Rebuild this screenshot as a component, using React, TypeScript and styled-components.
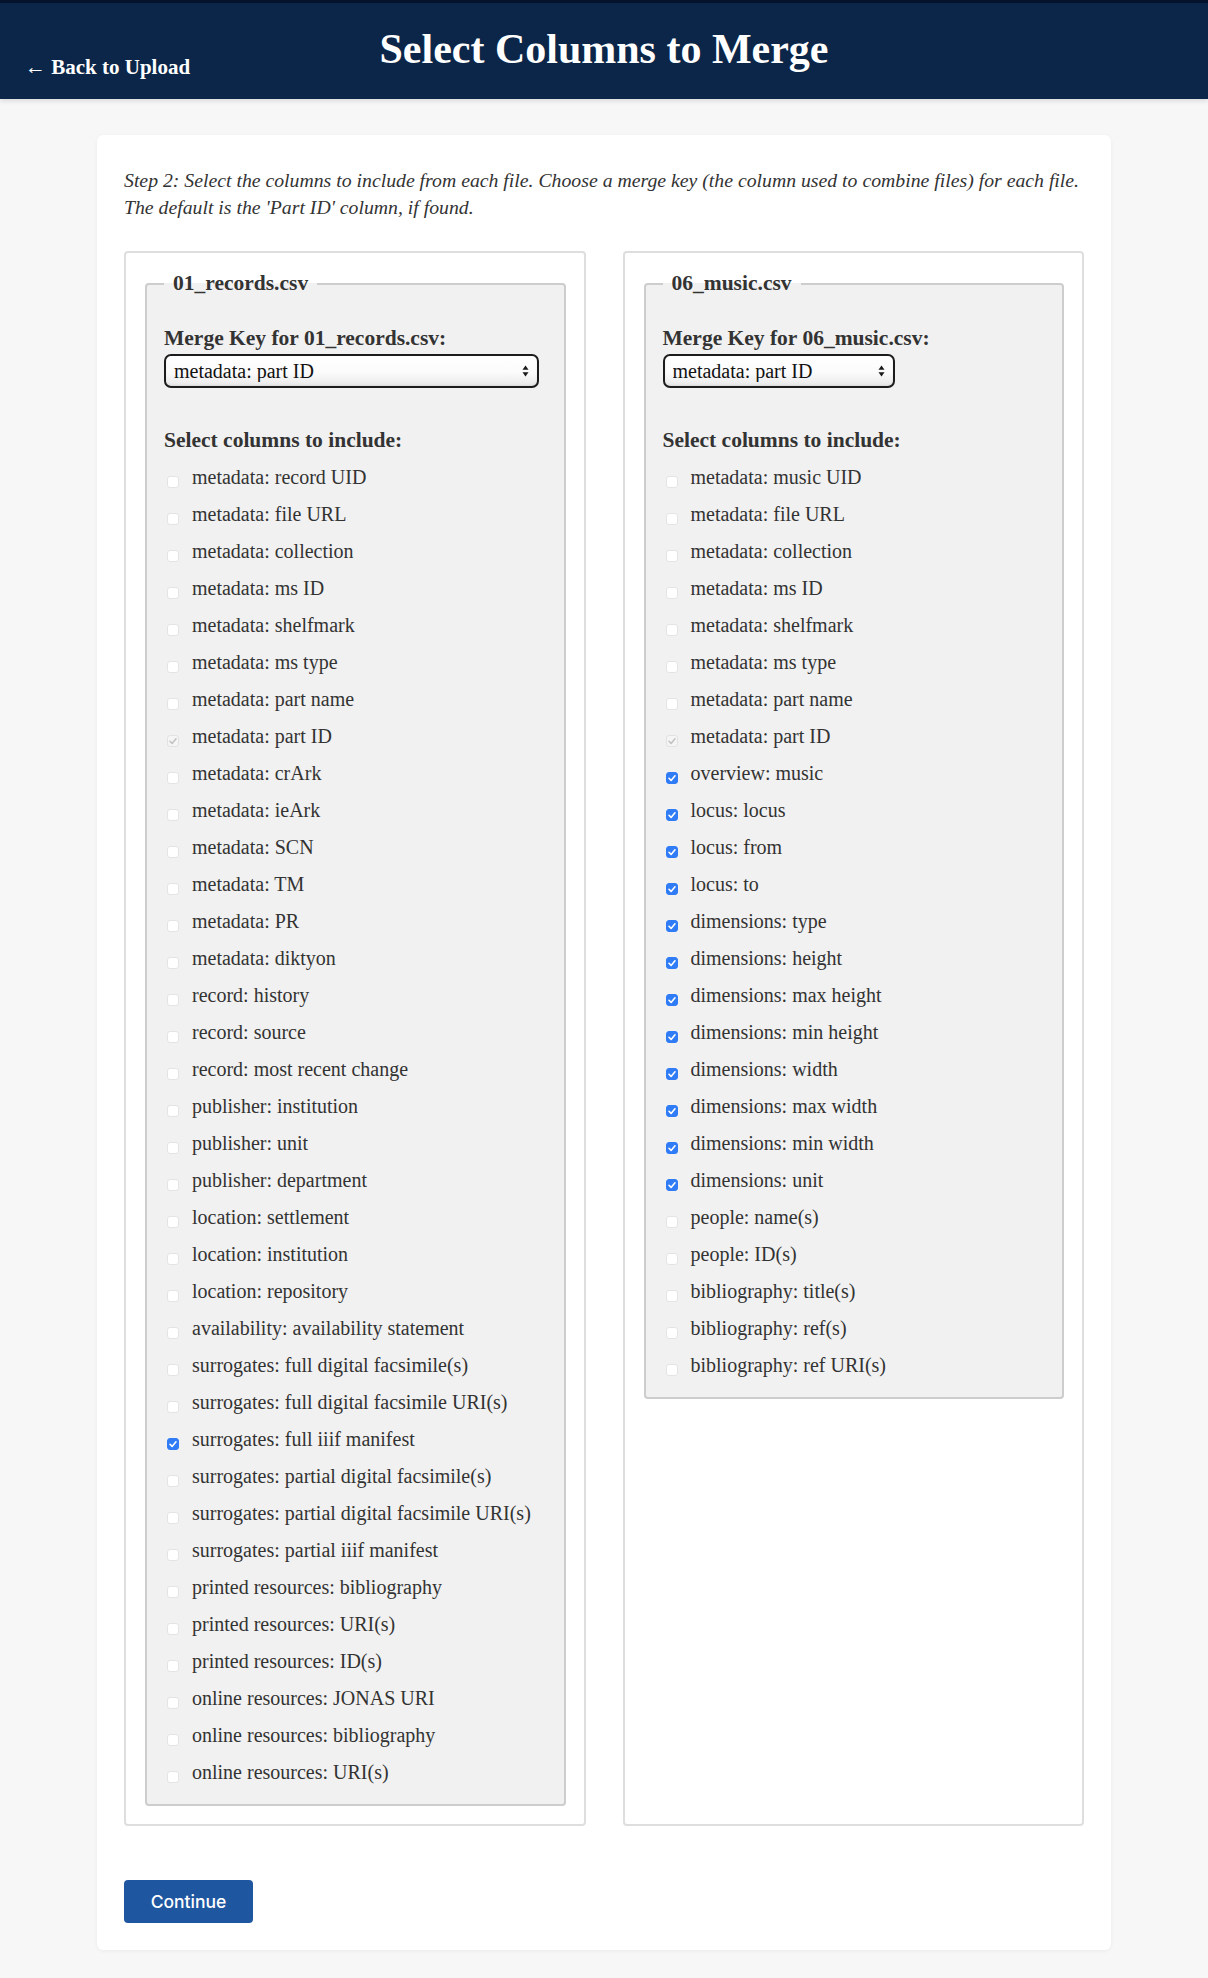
import React from "react";
import styled, { createGlobalStyle } from "styled-components";

const GlobalStyle = createGlobalStyle`
  html, body {
    margin: 0;
    padding: 0;
    background: #f7f7f7;
  }
  body {
    font-family: "Liberation Serif", "Times New Roman", serif;
    color: #333;
  }
  * { box-sizing: border-box; }
`;

type Col = { name: string; checked?: boolean; disabled?: boolean };

const recordCols: Col[] = [
  { name: "metadata: record UID" },
  { name: "metadata: file URL" },
  { name: "metadata: collection" },
  { name: "metadata: ms ID" },
  { name: "metadata: shelfmark" },
  { name: "metadata: ms type" },
  { name: "metadata: part name" },
  { name: "metadata: part ID", checked: true, disabled: true },
  { name: "metadata: crArk" },
  { name: "metadata: ieArk" },
  { name: "metadata: SCN" },
  { name: "metadata: TM" },
  { name: "metadata: PR" },
  { name: "metadata: diktyon" },
  { name: "record: history" },
  { name: "record: source" },
  { name: "record: most recent change" },
  { name: "publisher: institution" },
  { name: "publisher: unit" },
  { name: "publisher: department" },
  { name: "location: settlement" },
  { name: "location: institution" },
  { name: "location: repository" },
  { name: "availability: availability statement" },
  { name: "surrogates: full digital facsimile(s)" },
  { name: "surrogates: full digital facsimile URI(s)" },
  { name: "surrogates: full iiif manifest", checked: true },
  { name: "surrogates: partial digital facsimile(s)" },
  { name: "surrogates: partial digital facsimile URI(s)" },
  { name: "surrogates: partial iiif manifest" },
  { name: "printed resources: bibliography" },
  { name: "printed resources: URI(s)" },
  { name: "printed resources: ID(s)" },
  { name: "online resources: JONAS URI" },
  { name: "online resources: bibliography" },
  { name: "online resources: URI(s)" },
];

const musicCols: Col[] = [
  { name: "metadata: music UID" },
  { name: "metadata: file URL" },
  { name: "metadata: collection" },
  { name: "metadata: ms ID" },
  { name: "metadata: shelfmark" },
  { name: "metadata: ms type" },
  { name: "metadata: part name" },
  { name: "metadata: part ID", checked: true, disabled: true },
  { name: "overview: music", checked: true },
  { name: "locus: locus", checked: true },
  { name: "locus: from", checked: true },
  { name: "locus: to", checked: true },
  { name: "dimensions: type", checked: true },
  { name: "dimensions: height", checked: true },
  { name: "dimensions: max height", checked: true },
  { name: "dimensions: min height", checked: true },
  { name: "dimensions: width", checked: true },
  { name: "dimensions: max width", checked: true },
  { name: "dimensions: min width", checked: true },
  { name: "dimensions: unit", checked: true },
  { name: "people: name(s)" },
  { name: "people: ID(s)" },
  { name: "bibliography: title(s)" },
  { name: "bibliography: ref(s)" },
  { name: "bibliography: ref URI(s)" },
];

const Header = styled.header`
  height: 99px;
  background: #0b2648;
  box-shadow: inset 0 3px 0 #04122c, 0 2px 5px rgba(0, 0, 0, 0.12);
  display: grid;
  grid-template-columns: 1fr auto 1fr;
  align-items: start;
  padding: 25px 25px 0;
`;

const BackLink = styled.a`
  justify-self: start;
  margin-top: 30px;
  color: #fff;
  font-weight: 700;
  font-size: 21px;
  line-height: normal;
  text-decoration: none;
  cursor: pointer;
`;

const Title = styled.h1`
  margin: 0;
  color: #fff;
  font-size: 42px;
  font-weight: 700;
  line-height: normal;
`;

const Card = styled.main`
  width: 1014px;
  margin: 36px auto 28px;
  background: #fff;
  border-radius: 6px;
  box-shadow: 0 1px 4px rgba(0, 0, 0, 0.05);
  padding: 32px 27px 27px;
`;

const Intro = styled.p`
  margin: 0 0 30px;
  font-style: italic;
  font-size: 19.75px;
  line-height: 27px;
  color: #333;
`;

const Panels = styled.div`
  display: grid;
  grid-template-columns: 1fr 1fr;
  gap: 37px;
  align-items: stretch;
`;

const Panel = styled.section`
  border: 2px solid #dedede;
  border-radius: 4px;
  padding: 18px 18px 18.5px 19px;
`;

const FileSet = styled.fieldset`
  margin: 0;
  min-width: 0;
  background: #f1f1f1;
  border: 2px solid #cdcdcd;
  border-radius: 4px;
  padding: 30px 17px 13px;
`;

const Legend = styled.legend`
  padding: 0 9px;
  font-weight: 700;
  font-size: 21.5px;
  color: #333;
`;

const FieldLabel = styled.label`
  display: block;
  margin-bottom: 3px;
  font-weight: 700;
  font-size: 21.5px;
  line-height: normal;
  color: #333;
`;

const SelectWrap = styled.div`
  position: relative;
  display: inline-block;
  vertical-align: top;
`;

const KeySelect = styled.select`
  display: block;
  appearance: none;
  -webkit-appearance: none;
  height: 34px;
  border: 2px solid #1c1c1c;
  border-radius: 7px;
  padding: 0 24px 0 8px;
  font-family: "Liberation Serif", "Times New Roman", serif;
  font-size: 20px;
  color: #111;
  background: linear-gradient(#ffffff 0%, #fbfbfb 55%, #e9e9e9 100%);
  box-shadow: inset 0 -1px 2px rgba(0, 0, 0, 0.08);
  outline: none;
`;

const Arrows = styled.svg`
  position: absolute;
  right: 10px;
  top: 50%;
  transform: translateY(-50%);
  pointer-events: none;
`;

const SubHeading = styled.div`
  margin: 39.5px 0 6px;
  font-weight: 700;
  font-size: 21.5px;
  line-height: normal;
  color: #333;
`;

const List = styled.div`
  display: flex;
  flex-direction: column;
`;

const Row = styled.label`
  display: flex;
  align-items: flex-start;
  height: 37px;
  line-height: 37px;
  font-size: 20px;
  color: #333;
  white-space: nowrap;
`;

const Box = styled.span<{ $checked?: boolean; $disabled?: boolean }>`
  flex: none;
  width: 12px;
  height: 12px;
  margin: 17px 13px 0 3px;
  border-radius: 3px;
  display: flex;
  align-items: center;
  justify-content: center;
  background: ${(p) => (p.$disabled ? "#f5f5f5" : p.$checked ? "#2f7cf6" : "#fff")};
  border: 1px solid
    ${(p) => (p.$disabled ? "#e2e2e2" : p.$checked ? "#2f7cf6" : "#e4e4e4")};
`;

const ContinueButton = styled.button`
  display: block;
  margin-top: 54px;
  width: 129px;
  height: 43px;
  border: none;
  border-radius: 4px;
  background: #1f56a0;
  color: #fff;
  font-family: Inter, "Liberation Sans", sans-serif;
  font-size: 17.5px;
  font-weight: 500;
  cursor: pointer;
`;

function CheckBox({ checked, disabled }: { checked?: boolean; disabled?: boolean }) {
  return (
    <Box $checked={checked} $disabled={disabled}>
      {checked && (
        <svg width="10" height="10" viewBox="0 0 10 10">
          <path
            d="M2 5.3 L4.1 7.4 L8 2.8"
            fill="none"
            stroke={disabled ? "#c2c2c2" : "#fff"}
            strokeWidth="1.6"
            strokeLinecap="round"
            strokeLinejoin="round"
          />
        </svg>
      )}
    </Box>
  );
}

function FilePanel({ file, cols }: { file: string; cols: Col[] }) {
  const id = file.replace(/[^a-z0-9]/gi, "-");
  return (
    <Panel>
      <FileSet>
        <Legend>{file}</Legend>
        <FieldLabel htmlFor={id}>Merge Key for {file}:</FieldLabel>
        <SelectWrap>
          <KeySelect id={id} defaultValue="metadata: part ID">
            {cols.map((c) => (
              <option key={c.name} value={c.name}>
                {c.name}
              </option>
            ))}
          </KeySelect>
          <Arrows width="7" height="12" viewBox="0 0 7 12">
            <path d="M3.5 0.5 L6.5 4.8 L0.5 4.8 Z" fill="#1a1a1a" />
            <path d="M3.5 11.5 L6.5 7.2 L0.5 7.2 Z" fill="#1a1a1a" />
          </Arrows>
        </SelectWrap>
        <SubHeading>Select columns to include:</SubHeading>
        <List>
          {cols.map((c) => (
            <Row key={c.name}>
              <CheckBox checked={c.checked} disabled={c.disabled} />
              {c.name}
            </Row>
          ))}
        </List>
      </FileSet>
    </Panel>
  );
}

export default function App() {
  return (
    <>
      <GlobalStyle />
      <Header>
        <BackLink>← Back to Upload</BackLink>
        <Title>Select Columns to Merge</Title>
        <span />
      </Header>
      <Card>
        <Intro>
          Step 2: Select the columns to include from each file. Choose a merge key (the column used
          to combine files) for each file. The default is the 'Part ID' column, if found.
        </Intro>
        <Panels>
          <FilePanel file="01_records.csv" cols={recordCols} />
          <FilePanel file="06_music.csv" cols={musicCols} />
        </Panels>
        <ContinueButton>Continue</ContinueButton>
      </Card>
    </>
  );
}
